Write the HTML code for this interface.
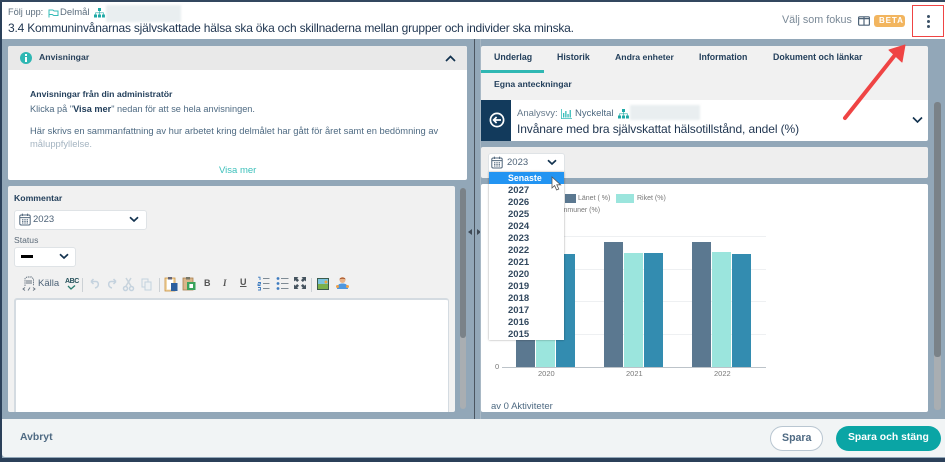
<!DOCTYPE html>
<html lang="sv"><head><meta charset="utf-8"><title>Följ upp</title>
<style>
html,body{margin:0;padding:0;width:945px;height:462px;overflow:hidden;background:#2b4059}
body{font-family:"Liberation Sans",sans-serif;position:relative;color:#1f3d5a}
#w{position:absolute;left:0;top:0;width:945px;height:462px;filter:blur(.35px);background:#2b4059}
.a{position:absolute;white-space:nowrap;line-height:1}
.b{position:absolute}
</style></head><body><div id="w">
<div class="b" style="left:2px;top:2px;width:943px;height:456px;background:#92a7b8"></div>
<div class="b" style="left:0;top:0;width:945px;height:2px;background:#33475f"></div>

<!-- header -->
<div class="b" style="left:2px;top:2px;width:943px;height:37px;background:#fff"></div>
<div class="a" style="left:8px;top:8px;font-size:9.2px;color:#5b6d7d">Följ upp:</div>
<svg class="b" style="left:48px;top:9px" width="11" height="9" viewBox="0 0 11 9" fill="none" stroke="#36bcb8" stroke-width="1"><path d="M1 .5V8.5M1 1H4.5C5.5 1 5.5 2 6.5 2H10V6.5H6C5 6.5 5 5.5 4 5.5H1"/></svg>
<div class="a" style="left:60px;top:8px;font-size:9.5px;color:#5b6d7d">Delmål</div>
<svg class="b" style="left:94px;top:8px" width="11" height="10" viewBox="0 0 11 10" fill="#1fa9a6"><rect x="4" y="0" width="3" height="3"/><rect x="0" y="6.5" width="3" height="3"/><rect x="4" y="6.5" width="3" height="3"/><rect x="8" y="6.5" width="3" height="3"/><path d="M5.2 3h.6v1.5H9.8V6.5h-.6V5.1H5.8v1.4h-.6V5.1H1.8v1.4h-.6V4.5h4z"/></svg>
<div class="b" style="left:106px;top:5px;width:75px;height:17px;background:#e9eef0;filter:blur(1px)"></div>
<div class="a" style="left:8px;top:22px;font-size:12px;color:#1f3550;letter-spacing:-.2px">3.4 Kommuninvånarnas självskattade hälsa ska öka och skillnaderna mellan grupper och individer ska minska.</div>
<div class="a" style="left:782px;top:15px;font-size:10.75px;color:#7a8997">Välj som fokus</div>
<svg class="b" style="left:858px;top:16px" width="12" height="10" viewBox="0 0 12 10" fill="none" stroke="#4f6478" stroke-width="1.2"><rect x=".6" y=".8" width="10.8" height="8.4" rx="1"/><path d="M6 1V9M1 2.6H11"/></svg>
<div class="b" style="left:874px;top:15px;width:31px;height:12px;background:#f2b55f;border-radius:3px"></div>
<div class="a" style="left:879px;top:17px;font-size:8px;font-weight:bold;color:#fff;letter-spacing:.9px">BETA</div>
<div class="b" style="left:926.5px;top:15px;width:3px;height:3px;border-radius:50%;background:#3c5268"></div>
<div class="b" style="left:926.5px;top:19.5px;width:3px;height:3px;border-radius:50%;background:#3c5268"></div>
<div class="b" style="left:926.5px;top:24.5px;width:3px;height:3px;border-radius:50%;background:#3c5268"></div>

<!-- Anvisningar -->
<div class="b" style="left:8px;top:46px;width:459px;height:134px;background:#fff;border-radius:2px"></div>
<div class="b" style="left:8px;top:46px;width:459px;height:24px;background:#e9e9e9;border-radius:2px 2px 0 0"></div>
<div class="b" style="left:20px;top:52px;width:12px;height:12px;border-radius:50%;background:#2fb7b3"></div>
<div class="b" style="left:25.3px;top:54px;width:1.6px;height:1.6px;background:#fff"></div>
<div class="b" style="left:25.3px;top:56.5px;width:1.6px;height:5px;background:#fff"></div>
<div class="a" style="left:39px;top:53px;font-size:8.7px;font-weight:bold;color:#29425c">Anvisningar</div>
<svg class="b" style="left:445px;top:55px" width="11" height="7" viewBox="0 0 11 7" fill="none" stroke="#12324f" stroke-width="1.7"><path d="M1 6L5.5 1.5L10 6"/></svg>
<div class="a" style="left:30px;top:90px;font-size:8.7px;font-weight:bold;color:#24405c">Anvisningar från din administratör</div>
<div class="a" style="left:30px;top:105px;font-size:9.2px;color:#4e6a82">Klicka på "<b style="color:#24405c">Visa mer</b>" nedan för att se hela anvisningen.</div>
<div class="a" style="left:30px;top:127px;font-size:9.35px;color:#4e6a82">Här skrivs en sammanfattning av hur arbetet kring delmålet har gått för året samt en bedömning av</div>
<div class="a" style="left:30px;top:139px;font-size:9.4px;color:#a4b4c1">måluppfyllelse.</div>
<div class="a" style="left:219px;top:166px;font-size:9.5px;color:#3cc0bb">Visa mer</div>

<!-- Kommentar -->
<div class="b" style="left:8px;top:186px;width:447px;height:226px;background:#f1f1f1;border-radius:2px"></div>
<div class="a" style="left:14px;top:194px;font-size:8.7px;font-weight:bold;color:#24405c">Kommentar</div>
<div class="b" style="left:14px;top:210px;width:131px;height:18px;background:#fff;border:1px solid #dfe3e6;border-radius:3px"></div>
<svg class="b" style="left:19px;top:213px" width="12" height="13" viewBox="0 0 12 13" fill="none" stroke="#51677c" stroke-width="1"><rect x=".8" y="2" width="10.4" height="10" rx="1.4"/><path d="M1 4.6H11M3.4.6V3M8.6.6V3"/><path d="M3 6.7H9M3 8.4H9M3 10H9" stroke-dasharray="1.4 .9"/></svg>
<div class="a" style="left:33px;top:215px;font-size:9.5px;color:#4e6378">2023</div>
<svg class="b" style="left:129px;top:216px" width="10" height="7" viewBox="0 0 10 7" fill="none" stroke="#12324f" stroke-width="1.7"><path d="M1 1.2L5 5L9 1.2"/></svg>
<div class="a" style="left:14px;top:236px;font-size:8.6px;color:#5b6a78">Status</div>
<div class="b" style="left:14px;top:247px;width:60px;height:18px;background:#fff;border:1px solid #dfe3e6;border-radius:3px"></div>
<div class="b" style="left:21px;top:255px;width:12px;height:3px;background:#000"></div>
<svg class="b" style="left:59px;top:253px" width="10" height="7" viewBox="0 0 10 7" fill="none" stroke="#12324f" stroke-width="1.7"><path d="M1 1.2L5 5L9 1.2"/></svg>

<!-- toolbar -->
<svg class="b" style="left:22px;top:276px" width="14" height="15" viewBox="0 0 14 15" fill="none" stroke="#667380" stroke-width=".9"><path d="M3 10V2.5L5 1H9.5L11.5 3V10" stroke-dasharray="1.5 .7"/><path d="M4 5H10M4 7H10"/><path d="M3 11.5L1 13L3 14.5M11 11.5L13 13L11 14.5M6 14.5L8 11.5"/></svg>
<div class="a" style="left:38px;top:279px;font-size:9.5px;color:#4e6378">Källa</div>
<div class="a" style="left:65px;top:278px;font-size:7px;font-weight:bold;color:#25505a;letter-spacing:-.4px">ABC</div>
<svg class="b" style="left:66px;top:285px" width="10" height="5" viewBox="0 0 10 5" fill="none" stroke="#2a7d6f" stroke-width="1.3"><path d="M2 1L5 4L9 .5"/></svg>
<div class="b" style="left:82px;top:278px;width:1px;height:14px;background:#ccd1d5"></div>
<svg class="b" style="left:87px;top:277px" width="70" height="15" viewBox="0 0 70 15" fill="none" stroke="#c4d2de" stroke-width="1.5"><path d="M4 4.5H9C12 4.5 12.5 10 8 11M4 4.5L6.5 2M4 4.5L6.5 7"/><path d="M29 4.5H24C21 4.5 20.5 10 25 11M29 4.5L26.5 2M29 4.5L26.5 7"/><path d="M39 1L44 9M44 1L39 9" stroke="#c8d3dc"/><circle cx="38.5" cy="11.5" r="2"/><circle cx="44.5" cy="11.5" r="2"/><rect x="55" y="2" width="6" height="8" stroke-width="1" /><rect x="58" y="5" width="6" height="8" fill="#eef1f3" stroke-width="1"/></svg>
<div class="b" style="left:159px;top:278px;width:1px;height:14px;background:#ccd1d5"></div>
<svg class="b" style="left:164px;top:276px" width="14" height="16" viewBox="0 0 14 16"><rect x="1" y="2" width="10" height="13" fill="#f3d9a8" stroke="#c98f3f" stroke-width=".8"/><rect x="3" y="3.5" width="6" height="10" fill="#fff"/><rect x="4" y="1" width="4" height="2.5" fill="#667"/><rect x="7" y="7" width="6.5" height="8" fill="#2c5f9e"/></svg>
<svg class="b" style="left:182px;top:276px" width="14" height="15" viewBox="0 0 14 15"><rect x="1" y="2" width="10" height="12" fill="#d9b68a" stroke="#a98150" stroke-width=".8"/><rect x="4" y="1" width="4" height="2.5" fill="#776"/><rect x="5" y="6" width="8.5" height="8" fill="#3aa35c"/><rect x="7.4" y="8" width="3.6" height="4" fill="#fff"/></svg>
<div class="a" style="left:204px;top:279px;font-size:9px;font-weight:bold;color:#555">B</div>
<div class="a" style="left:223px;top:279px;font-size:9px;font-weight:bold;font-style:italic;font-family:'Liberation Serif',serif;color:#555">I</div>
<div class="a" style="left:240px;top:278px;font-size:9px;font-weight:bold;color:#555;text-decoration:underline">U</div>
<svg class="b" style="left:257px;top:276px" width="13" height="15" viewBox="0 0 13 15" fill="none"><path d="M6 2.5H12.5M6 7.5H12.5M6 12.5H12.5" stroke="#7f8b95" stroke-width="1.1"/><path d="M1 1.2H3V4M1 6.5H3.5V8H1V9.5H3.5M1 11.5H3.5V14H1" stroke="#3d7bbf" stroke-width=".9"/></svg>
<svg class="b" style="left:276px;top:276px" width="13" height="15" viewBox="0 0 13 15"><path d="M5 2.5H12.5M5 7.5H12.5M5 12.5H12.5" stroke="#7f8b95" stroke-width="1.1"/><circle cx="2" cy="2.5" r="1.4" fill="#3d7bbf"/><circle cx="2" cy="7.5" r="1.4" fill="#3d7bbf"/><circle cx="2" cy="12.5" r="1.4" fill="#3d7bbf"/></svg>
<svg class="b" style="left:294px;top:277px" width="12" height="12" viewBox="0 0 12 12" fill="#46545f"><path d="M0 0H4.5L3.2 1.3L5 3.2L3.2 5L1.3 3.2L0 4.5zM12 0V4.5L10.7 3.2L8.8 5L7 3.2L8.8 1.3L7.5 0zM0 12V7.5L1.3 8.8L3.2 7L5 8.8L3.2 10.7L4.5 12zM12 12H7.5L8.8 10.7L7 8.8L8.8 7L10.7 8.8L12 7.5z"/></svg>
<div class="b" style="left:311px;top:278px;width:1px;height:14px;background:#ccd1d5"></div>
<svg class="b" style="left:317px;top:278px" width="12" height="12" viewBox="0 0 12 12"><rect width="12" height="12" fill="#3b5b4c"/><rect x="1" y="1" width="10" height="5" fill="#7cc4dd"/><rect x="1" y="6" width="10" height="5" fill="#7bb04a"/><circle cx="9" cy="4" r="1.5" fill="#f0a53a"/></svg>
<svg class="b" style="left:336px;top:276px" width="13" height="14" viewBox="0 0 13 14"><circle cx="6.5" cy="4" r="3" fill="#e9b48a"/><path d="M3.5 3.5C3.5 1 9.5 1 9.5 3.5C8 2.5 5 2.5 3.5 3.5z" fill="#a5532a"/><path d="M1 13C1 8.5 3.5 7.5 6.5 7.5S12 8.5 12 13z" fill="#4e97e0"/><rect x="0" y="9" width="3" height="3" rx="1.5" fill="#f0a24a"/><rect x="10" y="9" width="3" height="3" rx="1.5" fill="#f0a24a"/></svg>

<!-- editor -->
<div class="b" style="left:14px;top:298px;width:435px;height:114px;background:#fff;border:1px solid #d4dbe1;border-bottom:0;border-width:2px 1px 0 2px;box-sizing:border-box;border-radius:3px 3px 0 0"></div>

<!-- left scrollbar -->
<div class="b" style="left:460px;top:188px;width:6px;height:221px;background:#a9aeb2;border-radius:3px"></div>
<div class="b" style="left:460px;top:188px;width:6px;height:150px;background:#7a8288;border-radius:3px"></div>

<!-- splitter -->
<div class="b" style="left:474px;top:39px;width:1px;height:380px;background:#4a5560"></div>
<div class="b" style="left:468px;top:229px;width:0;height:0;border:3px solid transparent;border-right:4px solid #3f4a55;border-left:0"></div>
<div class="b" style="left:477px;top:229px;width:0;height:0;border:3px solid transparent;border-left:4px solid #3f4a55;border-right:0"></div>
<div class="b" style="left:480px;top:39px;width:1px;height:380px;background:#a8b8c5"></div>

<!-- tabs -->
<div class="b" style="left:481px;top:46px;width:447px;height:54px;background:#f1f1f1;border-radius:2px 2px 0 0"></div>
<div class="b" style="left:481px;top:70px;width:63px;height:3px;background:#2fb7b3"></div>
<div class="a" style="left:494px;top:53px;font-size:8.8px;font-weight:bold;color:#24405c">Underlag</div>
<div class="a" style="left:557px;top:53px;font-size:8.8px;font-weight:bold;color:#24405c">Historik</div>
<div class="a" style="left:615px;top:53px;font-size:8.7px;font-weight:bold;color:#24405c">Andra enheter</div>
<div class="a" style="left:699px;top:53px;font-size:8.8px;font-weight:bold;color:#24405c">Information</div>
<div class="a" style="left:773px;top:53px;font-size:8.8px;font-weight:bold;color:#24405c">Dokument och länkar</div>
<div class="a" style="left:494px;top:80px;font-size:8.7px;font-weight:bold;color:#24405c">Egna anteckningar</div>

<!-- Analysvy -->
<div class="b" style="left:481px;top:100px;width:447px;height:41px;background:#fff;border-radius:0 0 2px 2px"></div>
<div class="b" style="left:481px;top:100px;width:30px;height:41px;background:#123a5c"></div>
<svg class="b" style="left:489px;top:112px" width="16" height="16" viewBox="0 0 16 16" fill="none"><circle cx="8" cy="8" r="6.6" stroke="#fff" stroke-width="1.7"/><path d="M12 8H5M7.6 5L4.6 8L7.6 11" stroke="#fff" stroke-width="1.7"/></svg>
<div class="a" style="left:517px;top:109px;font-size:9.5px;color:#65798b">Analysvy:</div>
<svg class="b" style="left:561px;top:109px" width="11" height="10" viewBox="0 0 11 10" fill="#36bcb8"><path d="M0 0H.8V9.2H11V10H0z"/><rect x="2" y="4" width="1.3" height="4.5"/><rect x="4.2" y="2" width="1.3" height="6.5"/><rect x="6.4" y="5" width="1.3" height="3.5"/><rect x="8.6" y="1" width="1.3" height="7.5"/></svg>
<div class="a" style="left:575px;top:109px;font-size:9.5px;color:#4e6a82">Nyckeltal</div>
<svg class="b" style="left:618px;top:109px" width="11" height="10" viewBox="0 0 11 10" fill="#1fa9a6"><rect x="4" y="0" width="3" height="3"/><rect x="0" y="6.5" width="3" height="3"/><rect x="4" y="6.5" width="3" height="3"/><rect x="8" y="6.5" width="3" height="3"/><path d="M5.2 3h.6v1.5H9.8V6.5h-.6V5.1H5.8v1.4h-.6V5.1H1.8v1.4h-.6V4.5h4z"/></svg>
<div class="b" style="left:630px;top:105px;width:70px;height:15px;background:#e9eef0;filter:blur(1px)"></div>
<div class="a" style="left:517px;top:123px;font-size:12px;color:#1f3550;letter-spacing:-.1px">Invånare med bra självskattat hälsotillstånd, andel (%)</div>
<svg class="b" style="left:912px;top:116px" width="11" height="8" viewBox="0 0 11 8" fill="none" stroke="#12324f" stroke-width="1.6"><path d="M1 1.5L5.5 6L10 1.5"/></svg>

<!-- year panel -->
<div class="b" style="left:481px;top:147px;width:447px;height:31px;background:#eeeeee;border-radius:2px"></div>

<!-- chart panel -->
<div class="b" style="left:481px;top:184px;width:447px;height:228px;background:#fff;border-radius:2px"></div>
<div class="b" style="left:565px;top:194px;width:11px;height:9px;background:#5b7890"></div>
<div class="a" style="left:578px;top:195px;font-size:7px;color:#787878">Länet ( %)</div>
<div class="b" style="left:616px;top:194px;width:18px;height:9px;background:#9be5dd"></div>
<div class="a" style="left:637px;top:195px;font-size:7px;color:#787878">Riket (%)</div>
<div class="a" style="left:553px;top:207px;font-size:7px;color:#787878">Kommuner (%)</div>
<div class="b" style="left:502px;top:236px;width:264px;height:1px;background:#eef0f2"></div>
<div class="b" style="left:502px;top:269px;width:264px;height:1px;background:#eef0f2"></div>
<div class="b" style="left:502px;top:301px;width:264px;height:1px;background:#eef0f2"></div>
<div class="b" style="left:502px;top:334px;width:264px;height:1px;background:#eef0f2"></div>
<div class="b" style="left:516px;top:245px;width:19px;height:122px;background:#5b7890"></div>
<div class="b" style="left:536px;top:254px;width:19px;height:113px;background:#9be5dd"></div>
<div class="b" style="left:556px;top:254px;width:19px;height:113px;background:#338cb0"></div>
<div class="b" style="left:604px;top:242px;width:19px;height:125px;background:#5b7890"></div>
<div class="b" style="left:624px;top:253px;width:19px;height:114px;background:#9be5dd"></div>
<div class="b" style="left:644px;top:253px;width:19px;height:114px;background:#338cb0"></div>
<div class="b" style="left:692px;top:242px;width:19px;height:125px;background:#5b7890"></div>
<div class="b" style="left:712px;top:252px;width:19px;height:115px;background:#9be5dd"></div>
<div class="b" style="left:732px;top:254px;width:19px;height:113px;background:#338cb0"></div>
<div class="b" style="left:502px;top:367px;width:264px;height:1px;background:#bcc3c9"></div>
<div class="a" style="left:495px;top:363px;font-size:7.5px;color:#787878">0</div>
<div class="a" style="left:538px;top:370px;font-size:7.5px;color:#787878">2020</div>
<div class="a" style="left:626px;top:370px;font-size:7.5px;color:#787878">2021</div>
<div class="a" style="left:714px;top:370px;font-size:7.5px;color:#787878">2022</div>
<div class="a" style="left:491px;top:402px;font-size:9.5px;color:#4e6a82">av 0 Aktiviteter</div>

<!-- year select -->
<div class="b" style="left:488px;top:153px;width:75px;height:19px;background:#fff;border:1px solid #dfe3e6;border-radius:3px"></div>
<svg class="b" style="left:491px;top:156px" width="12" height="13" viewBox="0 0 12 13" fill="none" stroke="#51677c" stroke-width="1"><rect x=".8" y="2" width="10.4" height="10" rx="1.4"/><path d="M1 4.6H11M3.4.6V3M8.6.6V3"/><path d="M3 6.7H9M3 8.4H9M3 10H9" stroke-dasharray="1.4 .9"/></svg>
<div class="a" style="left:507px;top:158px;font-size:9.5px;color:#4e6378">2023</div>
<svg class="b" style="left:547px;top:159px" width="10" height="7" viewBox="0 0 10 7" fill="none" stroke="#12324f" stroke-width="1.7"><path d="M1 1.2L5 5L9 1.2"/></svg>

<!-- dropdown -->
<div class="b" style="left:489px;top:172px;width:75px;height:168px;background:#fff;box-shadow:0 0 2px rgba(0,0,0,.4)"></div>
<div class="b" style="left:489px;top:172px;width:75px;height:12px;background:#2294f2"></div>
<div class="a" style="left:508px;top:173.5px;font-size:8.8px;font-weight:bold;color:#fff">Senaste</div>
<div class="a" style="left:508px;top:185.5px;font-size:9.5px;font-weight:bold;color:#33495f">2027</div>
<div class="a" style="left:508px;top:197.5px;font-size:9.5px;font-weight:bold;color:#33495f">2026</div>
<div class="a" style="left:508px;top:209.5px;font-size:9.5px;font-weight:bold;color:#33495f">2025</div>
<div class="a" style="left:508px;top:221.5px;font-size:9.5px;font-weight:bold;color:#33495f">2024</div>
<div class="a" style="left:508px;top:233.5px;font-size:9.5px;font-weight:bold;color:#33495f">2023</div>
<div class="a" style="left:508px;top:245.5px;font-size:9.5px;font-weight:bold;color:#33495f">2022</div>
<div class="a" style="left:508px;top:257.5px;font-size:9.5px;font-weight:bold;color:#33495f">2021</div>
<div class="a" style="left:508px;top:269.5px;font-size:9.5px;font-weight:bold;color:#33495f">2020</div>
<div class="a" style="left:508px;top:281.5px;font-size:9.5px;font-weight:bold;color:#33495f">2019</div>
<div class="a" style="left:508px;top:293.5px;font-size:9.5px;font-weight:bold;color:#33495f">2018</div>
<div class="a" style="left:508px;top:305.5px;font-size:9.5px;font-weight:bold;color:#33495f">2017</div>
<div class="a" style="left:508px;top:317.5px;font-size:9.5px;font-weight:bold;color:#33495f">2016</div>
<div class="a" style="left:508px;top:329.5px;font-size:9.5px;font-weight:bold;color:#33495f">2015</div>
<svg class="b" style="left:551px;top:176px" width="12" height="16" viewBox="0 0 12 16"><path d="M1 1V12L3.6 9.6L5.6 14L7.8 13L5.8 8.8H9.6z" fill="#fff" stroke="#555" stroke-width=".8"/></svg>

<!-- right scrollbar -->
<div class="b" style="left:934px;top:102px;width:7px;height:308px;background:#a9aeb2;border-radius:3px"></div>
<div class="b" style="left:934px;top:102px;width:7px;height:255px;background:#7a8288;border-radius:3px"></div>

<!-- footer -->
<div class="b" style="left:2px;top:419px;width:943px;height:38px;background:#f1f4f5;border-radius:0 0 0 3px"></div>
<div class="a" style="left:20px;top:433px;font-size:10.4px;font-weight:bold;color:#4f6a83">Avbryt</div>
<div class="b" style="left:770px;top:426px;width:51px;height:23px;background:#fff;border:1px solid #b9c6d1;border-radius:13px"></div>
<div class="a" style="left:782px;top:433px;font-size:10.6px;font-weight:bold;color:#4f6a83">Spara</div>
<div class="b" style="left:836px;top:426px;width:105px;height:25px;background:#0aa5a5;border-radius:13px"></div>
<div class="a" style="left:848px;top:433px;font-size:10.4px;font-weight:bold;color:#fff">Spara och stäng</div>

<!-- annotation -->
<div class="b" style="left:912px;top:5px;width:30px;height:30px;border:1.5px solid #ef4444"></div>
<svg class="b" style="left:835px;top:40px" width="80" height="90" viewBox="0 0 80 90"><path d="M10 78L60 15" stroke="#ef4444" stroke-width="4" stroke-linecap="round"/><path d="M70 5L54 10L67 22z" fill="#ef4444" stroke="#ef4444" stroke-width="1" stroke-linejoin="round"/></svg>
</div></body></html>
